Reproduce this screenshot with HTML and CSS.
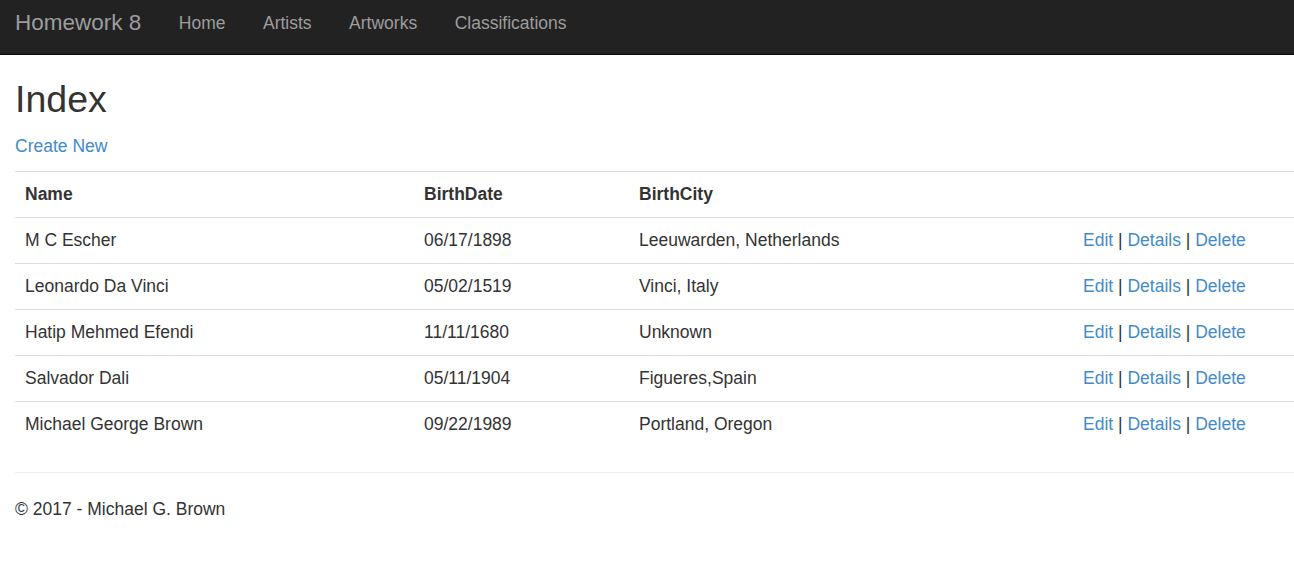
FILE: index.html
```html
<!DOCTYPE html>
<html>
<head>
<meta charset="utf-8">
<title>Index - Homework 8</title>
<link rel="stylesheet" href="styles.css">
</head>
<body>
<nav class="navbar">
  <a class="brand" href="#">Homework 8</a>
  <ul class="nav">
    <li><a href="#">Home</a></li>
    <li><a href="#">Artists</a></li>
    <li><a href="#">Artworks</a></li>
    <li><a href="#">Classifications</a></li>
  </ul>
</nav>
<div class="container">
  <h1 class="title">Index</h1>
  <p class="create"><a href="#">Create New</a></p>
  <table class="table">
    <colgroup>
      <col class="c-name">
      <col class="c-date">
      <col class="c-city">
      <col class="c-act">
    </colgroup>
    <thead>
      <tr><th>Name</th><th>BirthDate</th><th>BirthCity</th><th></th></tr>
    </thead>
    <tbody>
      <tr><td>M C Escher</td><td>06/17/1898</td><td>Leeuwarden, Netherlands</td><td><a href="#">Edit</a> | <a href="#">Details</a> | <a href="#">Delete</a></td></tr>
      <tr><td>Leonardo Da Vinci</td><td>05/02/1519</td><td>Vinci, Italy</td><td><a href="#">Edit</a> | <a href="#">Details</a> | <a href="#">Delete</a></td></tr>
      <tr><td>Hatip Mehmed Efendi</td><td>11/11/1680</td><td>Unknown</td><td><a href="#">Edit</a> | <a href="#">Details</a> | <a href="#">Delete</a></td></tr>
      <tr><td>Salvador Dali</td><td>05/11/1904</td><td>Figueres,Spain</td><td><a href="#">Edit</a> | <a href="#">Details</a> | <a href="#">Delete</a></td></tr>
      <tr><td>Michael George Brown</td><td>09/22/1989</td><td>Portland, Oregon</td><td><a href="#">Edit</a> | <a href="#">Details</a> | <a href="#">Delete</a></td></tr>
    </tbody>
  </table>
  <hr class="rule">
  <footer class="footer">
    <p>&copy; 2017 - Michael G. Brown</p>
  </footer>
</div>
</body>
</html>
```

FILE: styles.css
```css
* { box-sizing: border-box; }
html, body { margin: 0; padding: 0; }
body {
  font-family: "Liberation Sans", Arial, sans-serif;
  font-size: 17.5px;
  line-height: 25px;
  color: #333333;
  background: #ffffff;
}
a { color: #428bca; text-decoration: none; }

.navbar {
  display: flex;
  align-items: flex-start;
  height: 55px;
  padding: 10px 0 0 15px;
  background: #222222;
  border-bottom: 1px solid #080808;
}
.brand {
  font-size: 22.5px;
  line-height: 25px;
  color: #9d9d9d;
  padding-right: 18.75px;
}
.nav {
  display: flex;
  list-style: none;
  margin: 0;
  padding: 1px 0 0;
}
.nav a {
  display: block;
  color: #9d9d9d;
  padding: 0 18.75px;
  line-height: 25px;
}

.container { padding: 0 0 0 15px; }
.title {
  font-size: 37.5px;
  font-weight: 500;
  line-height: 41px;
  margin: 24px 0 14px;
}
.create { margin: 0 0 12px; }

.table {
  width: 100%;
  border-collapse: collapse;
  border-spacing: 0;
  table-layout: fixed;
}
.c-name { width: 399px; }
.c-date { width: 215px; }
.c-city { width: 444px; }
.c-act { width: 221px; }
.table th, .table td {
  text-align: left;
  padding: 10px;
  line-height: 25px;
  border-top: 1px solid #dddddd;
  vertical-align: top;
  white-space: nowrap;
}
.table th { font-weight: bold; }

.rule {
  border: 0;
  border-top: 1px solid #eeeeee;
  margin: 25px 0 24px;
  height: 0;
}
.footer p { margin: 0; }
```
